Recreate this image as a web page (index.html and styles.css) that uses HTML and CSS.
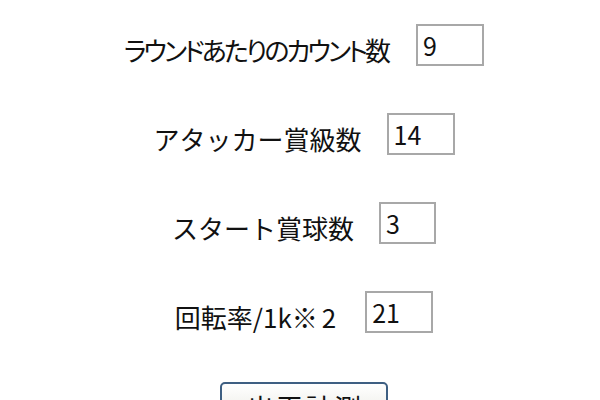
FILE: index.html
```html
<!DOCTYPE html>
<html lang="ja">
<head>
<meta charset="utf-8">
<link rel="stylesheet" href="styles.css">
</head>
<body>
<form class="form">
  <div class="row">
    <label class="label label-prop">ラウンドあたりのカウント数</label>
    <input class="field" type="text" value="9">
  </div>
  <div class="row">
    <label class="label">アタッカー賞級数</label>
    <input class="field" type="text" value="14">
  </div>
  <div class="row">
    <label class="label">スタート賞球数</label>
    <input class="field field-narrow" type="text" value="3">
  </div>
  <div class="row">
    <label class="label">回転率/1k<span class="wide">※2</span></label>
    <input class="field" type="text" value="21">
  </div>
  <div class="row">
    <button class="btn" type="button">出玉計測</button>
  </div>
</form>
</body>
</html>
```
FILE: styles.css
```css
html, body {
  margin: 0;
  padding: 0;
  background: #ffffff;
  overflow: hidden;
}
body {
  width: 600px;
  height: 400px;
  font-family: "Noto Sans CJK JP", "Noto Sans", sans-serif;
  color: #111;
}
.form {
  display: flex;
  flex-direction: column;
  gap: 47px;
  padding: 24px 0 0 8px;
}
.row {
  display: flex;
  justify-content: center;
  align-items: center;
  gap: 25px;
  height: 42px;
}
.label {
  font-size: 26px;
  line-height: 26px;
  padding-top: 9px;
  white-space: nowrap;
}
.label-prop {
  font-feature-settings: "palt" 1;
  letter-spacing: -3px;
  margin-right: 3px;
}
.wide {
  letter-spacing: 4px;
}
.field {
  box-sizing: border-box;
  width: 68px;
  height: 42px;
  margin: 0;
  padding: 0 5px;
  border: 2px solid #a8a8a8;
  background: #fff;
  font-family: "Noto Sans CJK JP", "Noto Sans", sans-serif;
  font-size: 25px;
  color: #111;
  outline: none;
}
.field-narrow {
  width: 57px;
}
.btn {
  box-sizing: border-box;
  width: 168px;
  height: 44px;
  margin-top: 2px;
  align-self: flex-start;
  padding: 6px 0 0 2px;
  border: 2px solid #3e5f82;
  border-radius: 5px;
  background: linear-gradient(#ffffff, #f1f1ec 60%, #e4e4dc);
  font-family: "Noto Sans CJK JP", "Noto Sans", sans-serif;
  font-size: 27px;
  line-height: 27px;
  letter-spacing: 2px;
  color: #111;
}
```
